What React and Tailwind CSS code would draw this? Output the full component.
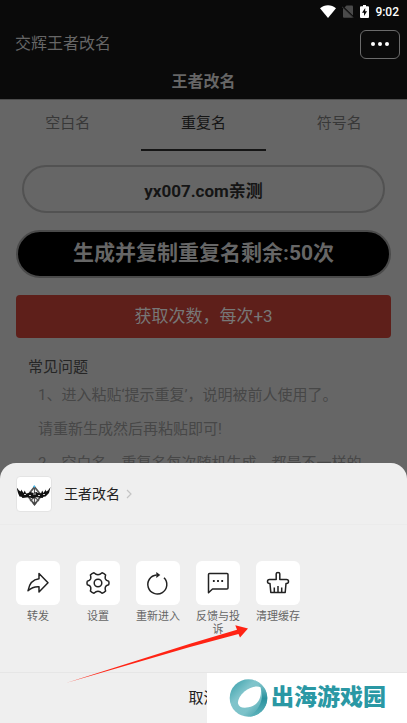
import { useState } from 'react'

const tabs = ['空白名', '重复名', '符号名']

const faq = [
  "1、进入粘贴‘提示重复’，说明被前人使用了。",
  '请重新生成然后再粘贴即可!',
  '2、空白名、重复名每次随机生成，都是不一样的',
]

function WifiIcon() {
  return (
    <svg width="16" height="13" viewBox="0 0 16 13" fill="#fff">
      <path d="M8 13 0 3.2C2.300 1.300 5 .3 8 .3s5.700 1 8 2.900Z" />
    </svg>
  )
}

function NoSimIcon() {
  return (
    <svg width="12" height="13" viewBox="0 0 12 13">
      <path d="M4.500 .5H10a1 1 0 0 1 1 1V12a.8.8 0 0 1-.8.800H2a1 1 0 0 1-1-1V4Z" fill="#4a4a4a" />
      <path d="M0 1 12 12.500" stroke="#0a0a0a" strokeWidth="1.600" />
      <path d="M0 1.800 11.500 12.800" stroke="#4a4a4a" strokeWidth=".7" />
    </svg>
  )
}

function BatteryIcon() {
  return (
    <svg width="9" height="13" viewBox="0 0 9 13">
      <path d="M3 0h3v1.300h2a1 1 0 0 1 1 1V12a1 1 0 0 1-1 1H1a1 1 0 0 1-1-1V2.300a1 1 0 0 1 1-1h2Z" fill="#fff" />
      <path d="M5.200 3 2 7.800h2v3.200l3.100-4.800H5.200Z" fill="#0a0a0a" />
    </svg>
  )
}

function AppLogo() {
  return (
    <svg width="34" height="34" viewBox="1 1 34 34">
      <path d="m18.500 11 7 8.500-7 9-7-9Z" fill="#fff" stroke="#555" strokeWidth="1.800" />
      <path d="M18.500 12v15M14 17l9 8M23 17l-9 8" stroke="#555" strokeWidth="1.200" />
      <path d="M.5 11 3 14.500l2 1 .2-2 2.300 3.500 1.300-2.500 1.200 3 3-.5 1.500-1 3 1 3-1 1.500 1 3 .5 1.200-3 1.300 2.500 2.300-3.500.2 2 2-1 2.500-3.500-1.500 6-3.500 3.500-2 .300-1 1.200-6-.8-4 1-4-1-6 .8-1-1.200-2-.3L2 17Z" fill="#111" />
      <path d="M8 18.500h2M13 19.500h2M17 18h3M22 19.500h2M27 18.500h2" stroke="#ccc" strokeWidth="1" />
      <circle cx="18.300" cy="10.500" r="1" fill="#38bdf8" />
      <path d="m18.500 29.500-2.500-3h5Z" fill="#444" />
    </svg>
  )
}

function Icon({ children }) {
  return (
    <svg width="44" height="44" viewBox="0 0 44 44" fill="none" stroke="#222" strokeWidth="1.500" strokeLinejoin="round">
      {children}
    </svg>
  )
}

const actions = [
  {
    label: '转发',
    icon: <path d="M23 12.500 32 21.700 23 31v-5.200c-5-.3-8 1.200-11 4 1-5.800 4.500-11.300 11-12Z" />,
  },
  {
    label: '设置',
    icon: (
      <>
        <path d="M32.700 20.200q.7 1.800 0 3.600Q29.800 24.400 29.300 26.200 28.900 27.800 29.600 30q-1.500 1.700-3.500 2.200Q24 30.200 22 30.200t-4.100 2q-2-.5-3.500-2.200.7-2.200.3-3.800Q14.200 24.400 11.300 23.800q-.7-1.800 0-3.600Q14.200 19.600 14.700 17.800 15.100 16.200 14.400 14q1.500-1.700 3.500-2.200 2.100 2 4.100 2t4.100-2q2 .5 3.500 2.200-.7 2.200-.3 3.800.5 1.800 3.400 2.400Z" />
        <circle cx="22" cy="22" r="3.800" />
      </>
    ),
  },
  {
    label: '重新进入',
    icon: (
      <>
        <path d="M28 16.700A9.500 9.500 0 1 1 20.500 14" />
        <path d="m20.300 11 4 3-4 3Z" fill="#222" stroke="none" />
      </>
    ),
  },
  {
    label: '反馈与投诉',
    icon: (
      <>
        <path d="M12.500 31.700V13.500a1 1 0 0 1 1-1H31a1 1 0 0 1 1 1V27a1 1 0 0 1-1 1H16.500Z" />
        <path d="M16.900 20h1.800M21.100 20h1.800M25.300 20h1.800" strokeWidth="1.800" />
      </>
    ),
  },
  {
    label: '清理缓存',
    icon: (
      <>
        <path d="M20.200 18.500v-5.700q0-1.300 1.800-1.300t1.800 1.300v5.700h6.700q2 0 2 2t-2 2H30l-.8 9H14.800l-.8-9h-.5q-2 0-2-2t2-2Z" />
        <path d="M18.300 31v-4.500M22 31v-6M25.700 31v-4.500" />
      </>
    ),
  },
]

function Watermark() {
  return (
    <div className="absolute right-0 bottom-0 flex h-[50px] w-[200px] items-center gap-0.5 bg-white pl-[22px]">
      <svg className="shrink-0" width="40" height="40" viewBox="0 0 40 40">
        <defs>
          <linearGradient id="ball" x1="0" y1="0" x2="1" y2="1">
            <stop offset="0" stopColor="#2f9aa6" />
            <stop offset=".35" stopColor="#7fc4cb" />
            <stop offset=".65" stopColor="#7cc2c9" />
            <stop offset="1" stopColor="#2a929e" />
          </linearGradient>
          <linearGradient id="rim" x1="0" y1="0" x2="0" y2="1">
            <stop offset="0" stopColor="#8fcdd3" />
            <stop offset=".5" stopColor="#2a929e" />
            <stop offset="1" stopColor="#5fb3bc" />
          </linearGradient>
        </defs>
        <circle cx="19.500" cy="20" r="18.800" fill="url(#ball)" />
        <path d="M25 2c8 3 13.300 10 13.300 18C38.300 30 30 38 20 38.800c8-5 13-13 13-22C33 11 30 5.500 25 2Z" fill="url(#rim)" />
        <path d="M31.500 9.300C28 7.200 21 9.200 15.500 13.500 11 17.200 8.500 22 9 25.500c.7 3.800 5 4.800 10.500 3.800 5-1 8.500-3.500 10.500-7.300 2-4 2.500-9.500 1.500-12.700Z" fill="#fff" />
      </svg>
      <span className="text-[23px] leading-7 font-black whitespace-nowrap text-[#2a98a4]">出海游戏园</span>
    </div>
  )
}

function ActionSheet() {
  return (
    <section className="absolute inset-x-0 bottom-0 overflow-hidden rounded-t-2xl bg-[#efefef]">
      <a href="#app" className="flex items-center border-b border-[#ebebeb] px-4 pt-[13px] pb-3">
        <span className="size-9 overflow-hidden rounded border border-[#e4e4e4] bg-white">
          <AppLogo />
        </span>
        <span className="ml-3 text-sm text-[#222]">王者改名</span>
        <svg className="ml-1.5" width="6" height="10" viewBox="0 0 6 10" fill="none" stroke="#c4c4c4" strokeWidth="1.200">
          <path d="m1 1 4 4-4 4" />
        </svg>
      </a>

      <div className="flex h-[147px] items-start gap-4 px-4 pt-9">
        {actions.map(a => (
          <button key={a.label} className="w-11 text-[11px] leading-[13px] text-[#666]">
            <span className="mb-[5px] block rounded-md bg-white">
              <Icon>{a.icon}</Icon>
            </span>
            {a.label}
          </button>
        ))}
      </div>

      <button className="h-[51px] w-full border-t border-[#e6e6e6] text-[15px] text-[#222]">取消</button>

      <Watermark />

      {/* Pointer to the clear cache action */}
      <svg className="pointer-events-none absolute bottom-10 left-[66px]" width="182" height="58" viewBox="0 0 182 58">
        <path d="M0 58 124 18.700 171 4.800 169.300.300 182 3.500 174 12.500 172.500 9 124 22Z" fill="#ff2314" />
      </svg>
    </section>
  )
}

export default function App() {
  const [active, setActive] = useState(1)
  const [name, setName] = useState('yx007.com亲测')

  return (
    <div className="relative h-screen overflow-hidden bg-[#666] font-[Roboto,'Noto_Sans_CJK_SC',sans-serif]">
      <header className="border-b border-[#4c4c4c] bg-[#0a0a0a]">
        <div className="flex h-[23px] items-center justify-end gap-1.5 pr-2">
          <WifiIcon />
          <NoSimIcon />
          <BatteryIcon />
          <span className="text-xs font-medium text-white">9:02</span>
        </div>
        <div className="flex h-[42px] items-center justify-between pr-[7px] pl-[15px]">
          <span className="text-base text-[#666]">交辉王者改名</span>
          <button aria-label="更多" className="flex h-[29px] w-10 items-center justify-center gap-[3px] rounded-md border border-[#6b6b6b]">
            <span className="size-1 rounded-full bg-white" />
            <span className="size-1 rounded-full bg-white" />
            <span className="size-1 rounded-full bg-white" />
          </button>
        </div>
        <h1 className="h-[34px] text-center text-base leading-[34px] font-bold text-[#666]">王者改名</h1>
      </header>

      <nav className="flex">
        {tabs.map((t, i) => (
          <button
            key={t}
            onClick={() => setActive(i)}
            className={`mx-[5px] h-[51px] flex-1 border-b-2 pb-0.5 text-[15px] ${i === active ? 'border-[#151515] text-[#151515]' : 'border-transparent text-[#383838]'}`}
          >
            {t}
          </button>
        ))}
      </nav>

      <main className="px-4 pt-[14px]">
        <div className="px-1.5">
          <input
            aria-label="名字"
            value={name}
            onChange={e => setName(e.target.value)}
            className="h-12 w-full rounded-full border-2 border-[#525252] text-center text-[17px] font-bold text-[#151515]"
          />
        </div>
        <button className="mt-[17px] h-12 w-full rounded-full border-2 border-[#4a4a4a] bg-black text-[21px] font-bold text-[#666]">
          生成并复制重复名剩余:50次
        </button>
        <button className="mt-[17px] h-[43px] w-full rounded bg-[#5e1f1a] text-[17px] text-[#777]">获取次数，每次+3</button>

        <h2 className="mt-[18px] px-3 text-[15px] leading-[22px] text-[#252525]">常见问题</h2>
        <div className="px-[22px] text-[15px] leading-[34px] whitespace-nowrap text-[#474747]">
          {faq.map(line => (
            <p key={line}>{line}</p>
          ))}
        </div>
      </main>

      <ActionSheet />
    </div>
  )
}
